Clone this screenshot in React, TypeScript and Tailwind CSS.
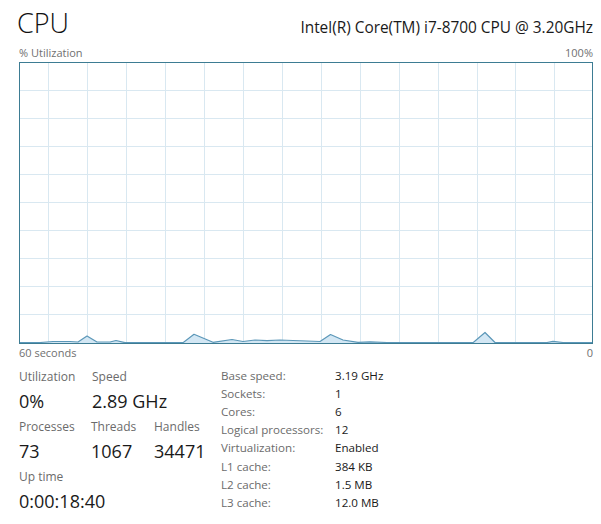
import React from "react";

const font = { fontFamily: '"Open Sans", "Noto Sans", sans-serif' };

// Utilization history, in graph-local coordinates (0..572 x 0..280)
const samples: [number, number][] = [
  [0, 279.5], [20, 279.5], [33, 278.5], [50, 278.5], [58, 279], [67, 273],
  [77, 279], [90, 279], [96, 277.5], [105, 279.7], [163, 279.7], [174, 271.3],
  [193, 279.3], [212, 276.5], [223, 278.5], [235, 277], [247, 277.7], [260, 277],
  [273, 277.5], [287, 278], [300, 278.5], [310.5, 271.5], [323, 277], [338, 279.3],
  [350, 278.8], [367, 279.5], [393, 279.7], [453, 279.7], [465, 269.5], [475, 279.5],
  [527, 279.5], [533, 278.3], [543, 279.5], [572, 279.5],
];

function UsageGraph() {
  const line = samples.map(([x, y]) => `${x},${y}`).join(" ");
  const area = `0,280 ${line} 572,280`;
  const hLines = [1, 2, 3, 4, 5, 6, 7, 8, 9].map((k) => 28 * k - 0.5);
  const vLines = Array.from({ length: 14 }, (_, k) => Math.round(28.3 + 38.93 * k) + 0.5);
  return (
    <div className="mt-[4px] h-[282px] w-[574px] border border-[#3d7c93] bg-white">
      <svg width="572" height="280" viewBox="0 0 572 280" className="block">
        {hLines.map((y) => (
          <line key={`h${y}`} x1="0" x2="572" y1={y} y2={y} stroke="#d9e8f1" strokeWidth="1" />
        ))}
        {vLines.map((x) => (
          <line key={`v${x}`} x1={x} x2={x} y1="0" y2="280" stroke="#d9e8f1" strokeWidth="1" />
        ))}
        <polygon points={area} fill="#d3e7f4" />
        <polyline points={line} fill="none" stroke="#5b97b8" strokeWidth="1.2" strokeLinejoin="round" />
      </svg>
    </div>
  );
}

function Stat({ label, value, width }: { label: string; value: string; width: string }) {
  return (
    <div className={`flex flex-col ${width}`}>
      <div className="text-[12px] leading-[18px] text-[#6b6b6b]">{label}</div>
      <div className="mt-[3px] text-[18px] leading-[24px] text-[#1a1a1a]">{value}</div>
    </div>
  );
}

const specs: [string, string][] = [
  ["Base speed:", "3.19 GHz"],
  ["Sockets:", "1"],
  ["Cores:", "6"],
  ["Logical processors:", "12"],
  ["Virtualization:", "Enabled"],
  ["L1 cache:", "384 KB"],
  ["L2 cache:", "1.5 MB"],
  ["L3 cache:", "12.0 MB"],
];

export default function App() {
  return (
    <div className="h-[524px] w-[601px] overflow-hidden bg-white pl-[19px] pr-[8px]" style={font}>
      {/* Header */}
      <div className="flex items-baseline justify-between pt-[9px]">
        <div className="-ml-[2px] text-[27px] font-light leading-none text-[#111]">CPU</div>
        <div className="text-[15.4px] leading-none text-[#1a1a1a]">Intel(R) Core(TM) i7-8700 CPU @ 3.20GHz</div>
      </div>

      <div className="mt-[11px] flex justify-between text-[11px] leading-none text-[#707070]">
        <span>% Utilization</span>
        <span>100%</span>
      </div>

      <UsageGraph />

      <div className="mt-[3px] flex justify-between text-[11px] leading-none text-[#707070]">
        <span>60 seconds</span>
        <span>0</span>
      </div>

      {/* Stats */}
      <div className="mt-[9px] flex">
        <div className="mt-[1px] flex w-[202px] flex-col gap-[5px]">
          <div className="flex">
            <Stat label="Utilization" value="0%" width="w-[73px]" />
            <Stat label="Speed" value="2.89 GHz" width="w-[100px]" />
          </div>
          <div className="flex">
            <Stat label="Processes" value="73" width="w-[72px]" />
            <Stat label="Threads" value="1067" width="w-[63px]" />
            <Stat label="Handles" value="34471" width="w-[60px]" />
          </div>
          <div className="flex">
            <Stat label="Up time" value="0:00:18:40" width="w-[120px]" />
          </div>
        </div>
        <div className="flex flex-col">
          {specs.map(([k, v]) => (
            <div key={k} className="flex h-[18.1px] items-center text-[11.6px] leading-[18px]">
              <span className="w-[114px] text-[#6b6b6b]">{k}</span>
              <span className="text-[#1a1a1a]">{v}</span>
            </div>
          ))}
        </div>
      </div>
    </div>
  );
}
